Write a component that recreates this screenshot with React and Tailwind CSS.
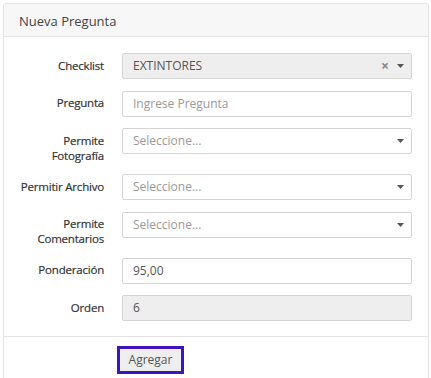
import React from 'react';

const Caret = () => (
  <svg width="7" height="4" viewBox="0 0 7 4" className="shrink-0">
    <path d="M0 0 L7 0 L3.5 4 Z" fill="#555" />
  </svg>
);

const Row = ({ label, children }) => (
  <div className="flex items-start mb-[11.5px]">
    <label className="w-[100px] shrink-0 text-right text-[#333] pt-[4.5px] leading-[15px] text-[11.5px] tracking-[-0.2px] [-webkit-text-stroke:0.2px_#333]">
      {label}
    </label>
    <div className="ml-[18px] flex-1">{children}</div>
  </div>
);

const Select = ({ value, placeholder, clear, disabled }) => (
  <div
    className={`h-[26px] flex items-center border border-[#d5d5d5] rounded-[2px] pl-[10px] pr-[7px] ${
      disabled ? 'bg-[#eeeeee]' : 'bg-white'
    }`}
  >
    <span className={`flex-1 ${value ? 'text-[#555]' : 'text-[#999]'}`}>{value || placeholder}</span>
    {clear && <span className="text-[#888] font-bold text-[14px] mr-[8px] leading-none">×</span>}
    <Caret />
  </div>
);

const Input = ({ value, placeholder, disabled }) => (
  <div
    className={`h-[26px] flex items-center border border-[#d5d5d5] rounded-[2px] pl-[10px] ${
      disabled ? 'bg-[#eeeeee]' : 'bg-white'
    }`}
  >
    <span className={value ? 'text-[#555]' : 'text-[#999]'}>{value || placeholder}</span>
  </div>
);

export default function App() {
  return (
    <div className="w-[431px] h-[378px] bg-white pt-[3px] pl-[3px] pr-[2px] overflow-hidden text-[12px] font-['Open_Sans',sans-serif]">
      <div className="border border-[#e3e3e3] rounded-[3px] h-[400px]">
        <div className="h-[33px] bg-[#f7f7f7] border-b border-[#e3e3e3] flex items-center pt-[4px] pl-[15px] text-[#444] text-[13px]">
          Nueva Pregunta
        </div>
        <div className="pt-[16px] pr-[16px] pb-[3px]">
          <Row label="Checklist">
            <Select value="EXTINTORES" clear disabled />
          </Row>
          <Row label="Pregunta">
            <Input placeholder="Ingrese Pregunta" />
          </Row>
          <Row label={<>Permite<br />Fotografía</>}>
            <Select placeholder="Seleccione..." />
          </Row>
          <Row label="Permitir Archivo">
            <Select placeholder="Seleccione..." />
          </Row>
          <Row label={<>Permite<br />Comentarios</>}>
            <Select placeholder="Seleccione..." />
          </Row>
          <Row label="Ponderación">
            <Input value="95,00" />
          </Row>
          <Row label="Orden">
            <Input value="6" disabled />
          </Row>
        </div>
        <div className="border-t border-[#e3e3e3] pt-[9px] pl-[113px]">
          <button className="w-[67px] h-[28px] border-[3px] border-[#3f14bf] bg-[#eeeeee] text-[#555] text-[12px]">
            Agregar
          </button>
        </div>
      </div>
    </div>
  );
}
